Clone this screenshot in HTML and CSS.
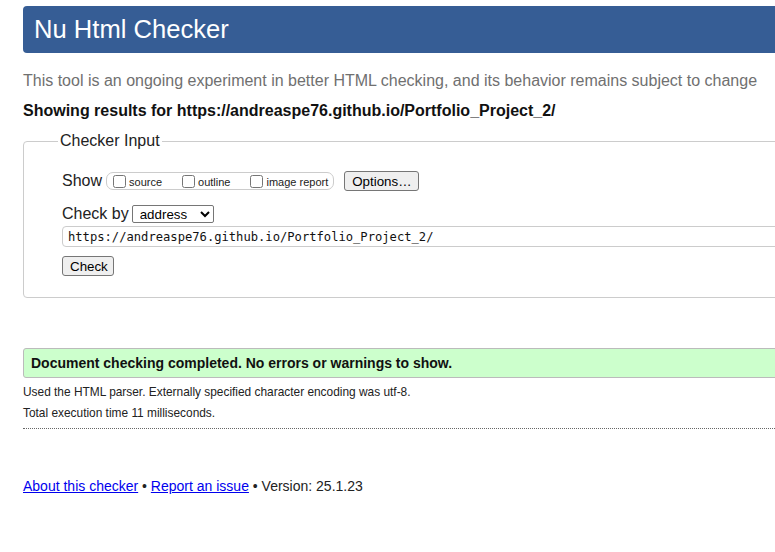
FILE: index.html
```html
<!DOCTYPE html>
<html lang="en">
<head>
<meta charset="utf-8">
<title>Nu Html Checker</title>
<link rel="stylesheet" href="styles.css">
</head>
<body>
<div class="page">
  <h1 class="title">Nu Html Checker</h1>
  <p class="tagline">This tool is an ongoing experiment in better HTML checking, and its behavior remains subject to change</p>
  <p class="showing">Showing results for https://andreaspe76.github.io/Portfolio_Project_2/</p>
  <form class="checker">
    <fieldset class="inputs">
      <legend class="legend">Checker Input</legend>
      <div class="row row-show">
        <span class="label">Show</span>
        <span class="group">
          <label class="opt"><input type="checkbox" class="cb"><span>source</span></label>
          <label class="opt"><input type="checkbox" class="cb"><span>outline</span></label>
          <label class="opt"><input type="checkbox" class="cb"><span>image report</span></label>
        </span>
        <button type="button" class="btn btn-options">Options…</button>
      </div>
      <div class="row row-by">
        <span class="label">Check by</span>
        <select class="select"><option>address</option></select>
      </div>
      <div class="row row-url">
        <input class="url" type="text" value="https://andreaspe76.github.io/Portfolio_Project_2/">
      </div>
      <div class="row row-check">
        <button type="button" class="btn btn-check">Check</button>
      </div>
    </fieldset>
  </form>
  <div class="success">Document checking completed. No errors or warnings to show.</div>
  <p class="details">Used the HTML parser. Externally specified character encoding was utf-8.</p>
  <p class="details">Total execution time 11 milliseconds.</p>
  <hr class="rule">
  <p class="footer"><a href="#">About this checker</a> • <a href="#">Report an issue</a> • Version: 25.1.23</p>
</div>
</body>
</html>
```
FILE: styles.css
```css
html, body {
  margin: 0;
  padding: 0;
  background: #fff;
  overflow: hidden;
}
body {
  font-family: "Liberation Sans", Arial, sans-serif;
  color: #111;
}
.page {
  display: flex;
  flex-direction: column;
  padding: 6px 0 0 23px;
  width: 1000px;
}
.title {
  margin: 0;
  height: 47px;
  line-height: 46px;
  padding: 0 11px;
  background: #365d95;
  color: #fff;
  font-size: 25.6px;
  font-weight: normal;
  border-radius: 4px;
}
.tagline {
  margin: 18px 0 0;
  font-size: 16px;
  line-height: 20px;
  color: #707070;
}
.showing {
  margin: 10px 0 0;
  font-size: 16px;
  line-height: 20px;
  font-weight: bold;
  color: #111;
}
.checker {
  margin: 11px 0 0;
}
.inputs {
  margin: 0;
  padding: 21px 0 21px 38px;
  border: 1px solid #ccc;
  border-radius: 4px;
  min-width: 0;
}
.legend {
  font-size: 16px;
  line-height: 18px;
  padding: 0 2px;
  margin-left: -4px;
  color: #222;
}
.row {
  display: flex;
  align-items: center;
}
.label {
  font-size: 16px;
  color: #222;
}
.row-show {
  height: 20px;
}
.group {
  display: flex;
  align-items: center;
  height: 16px;
  margin-left: 4px;
  padding: 0 5px 0 6px;
  border: 1px solid #ccc;
  border-radius: 7px;
  gap: 20px;
}
.opt {
  display: flex;
  align-items: center;
  font-size: 11px;
  color: #222;
}
.opt span {
  margin-left: 3px;
  position: relative;
  top: 1px;
}
.cb {
  margin: 0;
  width: 13px;
  height: 13px;
}
.btn {
  font-family: "Liberation Sans", Arial, sans-serif;
  font-size: 13.333px;
  height: 20px;
  padding: 0 7px;
  background: #efefef;
  border: 1px solid #767676;
  border-radius: 3px;
  color: #000;
}
.btn-options {
  margin-left: 10px;
  width: 75px;
}
.row-by {
  margin-top: 14px;
  height: 18px;
}
.select {
  margin-left: 3px;
  width: 82px;
  height: 18px;
  padding: 0 0 0 3px;
  font-family: "Liberation Sans", Arial, sans-serif;
  font-size: 13.333px;
  border: 1px solid #767676;
  border-radius: 2px;
  background: #fff;
  color: #000;
}
.row-url {
  margin-top: 3px;
}
.url {
  box-sizing: border-box;
  width: 1000px;
  height: 21px;
  margin: 0;
  padding: 0 0 0 5px;
  border: 1px solid #ccc;
  border-radius: 4px;
  font-family: "DejaVu Sans Mono", "Liberation Mono", monospace;
  font-size: 12.15px;
  color: #111;
}
.row-check {
  margin-top: 9px;
}
.btn-check {
  width: 52px;
}
.success {
  margin-top: 50px;
  height: 28px;
  line-height: 28px;
  padding-left: 7px;
  background: #ccffcc;
  border: 1px solid #bbb;
  border-radius: 3px;
  font-size: 14px;
  font-weight: bold;
  color: #111;
}
.details {
  margin: 0;
  font-size: 11.9px;
  line-height: 21px;
  color: #222;
}
.success + .details {
  margin-top: 4px;
}
.rule {
  margin: 4px 0 0;
  border: 0;
  border-top: 1px dotted #666;
  height: 0;
}
.footer {
  margin: 47px 0 0;
  font-size: 14px;
  line-height: 20px;
  color: #222;
}
.footer a {
  color: #0000ee;
}
```
